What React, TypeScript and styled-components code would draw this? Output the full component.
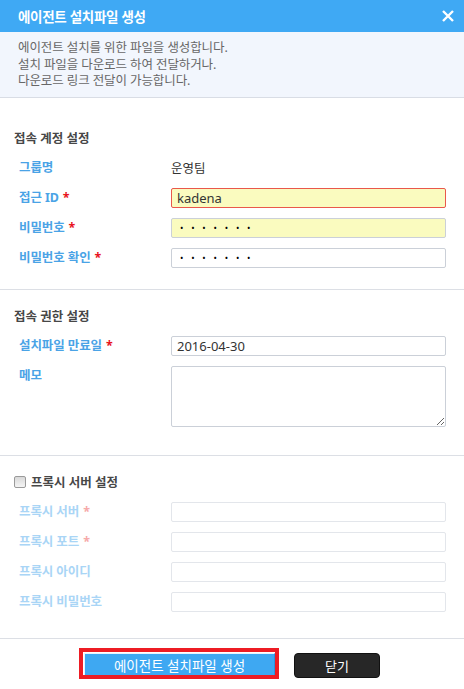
import styled, { createGlobalStyle } from "styled-components";

const GlobalStyle = createGlobalStyle`
  html, body {
    margin: 0;
    padding: 0;
    background: #fff;
  }
  body {
    font-family: "Noto Sans", "Noto Sans CJK KR", sans-serif;
  }
`;

const Dialog = styled.div`
  width: 464px;
  background: #fff;
  display: flex;
  flex-direction: column;
`;

const Header = styled.header`
  height: 32px;
  background: #3fa9f4;
  display: flex;
  align-items: center;
  justify-content: space-between;
  padding: 0 10px 0 18px;
`;

const HeaderTitle = styled.h1`
  margin: 0;
  font-size: 13.5px;
  font-weight: 700;
  color: #fff;
  letter-spacing: -0.3px;
`;

const CloseIcon = styled.button`
  border: 0;
  background: none;
  padding: 0;
  width: 12px;
  height: 12px;
  display: flex;
  cursor: pointer;
`;

const Notice = styled.div`
  background: #f2f6fd;
  border-bottom: 1px solid #d9dde5;
  padding: 8px 18px 7px;
  font-size: 12.5px;
  line-height: 16.5px;
  color: #676767;
  letter-spacing: -0.1px;
`;

const Section = styled.section<{ $top: number; $bottom: number }>`
  padding: ${(p) => p.$top}px 18px ${(p) => p.$bottom}px 14px;
  border-bottom: 1px solid #dcdfe5;
  display: flex;
  flex-direction: column;
  gap: 10px;
`;

const SectionTitle = styled.h2`
  margin: 0;
  height: 20px;
  display: flex;
  align-items: center;
  gap: 5px;
  font-size: 12.5px;
  font-weight: 700;
  color: #474747;
`;

const Check = styled.input`
  appearance: none;
  margin: 0;
  width: 12px;
  height: 12px;
  border: 1px solid #9a9a9a;
  border-radius: 2px;
  background: linear-gradient(#d9d9d9, #f4f4f4);
`;

const Row = styled.div<{ $top?: boolean }>`
  display: grid;
  grid-template-columns: 157px 1fr;
  align-items: ${(p) => (p.$top ? "start" : "center")};
  min-height: 20px;
`;

const Label = styled.label<{ $muted?: boolean }>`
  padding-left: 5px;
  line-height: 20px;
  font-size: 12.5px;
  font-weight: 700;
  letter-spacing: -0.1px;
  color: ${(p) => (p.$muted ? "#a9d5f6" : "#4aa3e6")};
`;

const Star = styled.span<{ $muted?: boolean }>`
  margin-left: 4px;
  color: ${(p) => (p.$muted ? "#f6a9a9" : "#e8141c")};
`;

const Value = styled.span`
  font-size: 12.5px;
  color: #333;
`;

const Field = styled.input<{ $state?: "error" | "filled" | "muted" }>`
  box-sizing: border-box;
  width: 100%;
  height: 20px;
  margin: 0;
  padding: 0 5px;
  font-family: "Noto Sans", "Noto Sans CJK KR", sans-serif;
  font-size: 13px;
  color: #333;
  border-radius: 2px;
  outline: none;
  border: 1px solid
    ${(p) =>
      p.$state === "error" ? "#e9584b" : p.$state === "muted" ? "#e3e6eb" : "#cbd0d8"};
  background: ${(p) =>
    p.$state === "error" || p.$state === "filled" ? "#fafbbf" : "#fff"};
`;

const Password = styled(Field)`
  font-size: 9px;
  color: #000;
  letter-spacing: 7.8px;
  padding-left: 8px;
`;

const Memo = styled.textarea`
  box-sizing: border-box;
  width: 100%;
  height: 61px;
  margin: 0;
  display: block;
  border: 1px solid #cbd0d8;
  border-radius: 2px;
  font-family: "Noto Sans", "Noto Sans CJK KR", sans-serif;
  font-size: 12px;
  outline: none;
`;

const Footer = styled.footer`
  display: flex;
  justify-content: center;
  gap: 19px;
  padding: 14px 0 10px;
`;

const Button = styled.button<{ $dark?: boolean }>`
  position: relative;
  box-sizing: border-box;
  height: 25px;
  width: ${(p) => (p.$dark ? "86px" : "191px")};
  margin: 0;
  padding: 0;
  font-family: "Noto Sans", "Noto Sans CJK KR", sans-serif;
  font-size: ${(p) => (p.$dark ? "13px" : "13.5px")};
  color: #fff;
  cursor: pointer;
  border-radius: ${(p) => (p.$dark ? "4px" : "0")};
  background: ${(p) => (p.$dark ? "#272727" : "#3ea8f2")};
  border: 1px solid ${(p) => (p.$dark ? "#111" : "#2d93dc")};
  border-top-color: ${(p) => (p.$dark ? "#111" : "#e6f4ff")};
  border-left-color: ${(p) => (p.$dark ? "#111" : "#e6f4ff")};
`;

const Highlight = styled.span`
  position: absolute;
  top: -6px;
  left: -6px;
  right: -5px;
  bottom: -2px;
  border: 4.5px solid #ed1c24;
  pointer-events: none;
`;

export default function App() {
  return (
    <Dialog>
      <GlobalStyle />
      <Header>
        <HeaderTitle>에이전트 설치파일 생성</HeaderTitle>
        <CloseIcon aria-label="닫기">
          <svg width="12" height="12" viewBox="0 0 12 12">
            <path d="M1 1L11 11M11 1L1 11" stroke="#fff" strokeWidth="2.4" />
          </svg>
        </CloseIcon>
      </Header>
      <Notice>
        에이전트 설치를 위한 파일을 생성합니다.
        <br />
        설치 파일을 다운로드 하여 전달하거나.
        <br />
        다운로드 링크 전달이 가능합니다.
      </Notice>

      <Section $top={30} $bottom={21}>
        <SectionTitle>접속 계정 설정</SectionTitle>
        <Row>
          <Label>그룹명</Label>
          <Value>운영팀</Value>
        </Row>
        <Row>
          <Label>
            접근 ID<Star>*</Star>
          </Label>
          <Field $state="error" defaultValue="kadena" />
        </Row>
        <Row>
          <Label>
            비밀번호<Star>*</Star>
          </Label>
          <Password $state="filled" type="password" defaultValue="1234567" />
        </Row>
        <Row>
          <Label>
            비밀번호 확인<Star>*</Star>
          </Label>
          <Password type="password" defaultValue="1234567" />
        </Row>
      </Section>

      <Section $top={16} $bottom={28}>
        <SectionTitle>접속 권한 설정</SectionTitle>
        <Row>
          <Label>
            설치파일 만료일<Star>*</Star>
          </Label>
          <Field defaultValue="2016-04-30" />
        </Row>
        <Row $top>
          <Label>메모</Label>
          <Memo />
        </Row>
      </Section>

      <Section $top={16} $bottom={26}>
        <SectionTitle>
          <Check type="checkbox" />
          프록시 서버 설정
        </SectionTitle>
        <Row>
          <Label $muted>
            프록시 서버<Star $muted>*</Star>
          </Label>
          <Field $state="muted" disabled />
        </Row>
        <Row>
          <Label $muted>
            프록시 포트<Star $muted>*</Star>
          </Label>
          <Field $state="muted" disabled />
        </Row>
        <Row>
          <Label $muted>프록시 아이디</Label>
          <Field $state="muted" disabled />
        </Row>
        <Row>
          <Label $muted>프록시 비밀번호</Label>
          <Field $state="muted" disabled />
        </Row>
      </Section>

      <Footer>
        <Button>
          에이전트 설치파일 생성
          <Highlight />
        </Button>
        <Button $dark>닫기</Button>
      </Footer>
    </Dialog>
  );
}
